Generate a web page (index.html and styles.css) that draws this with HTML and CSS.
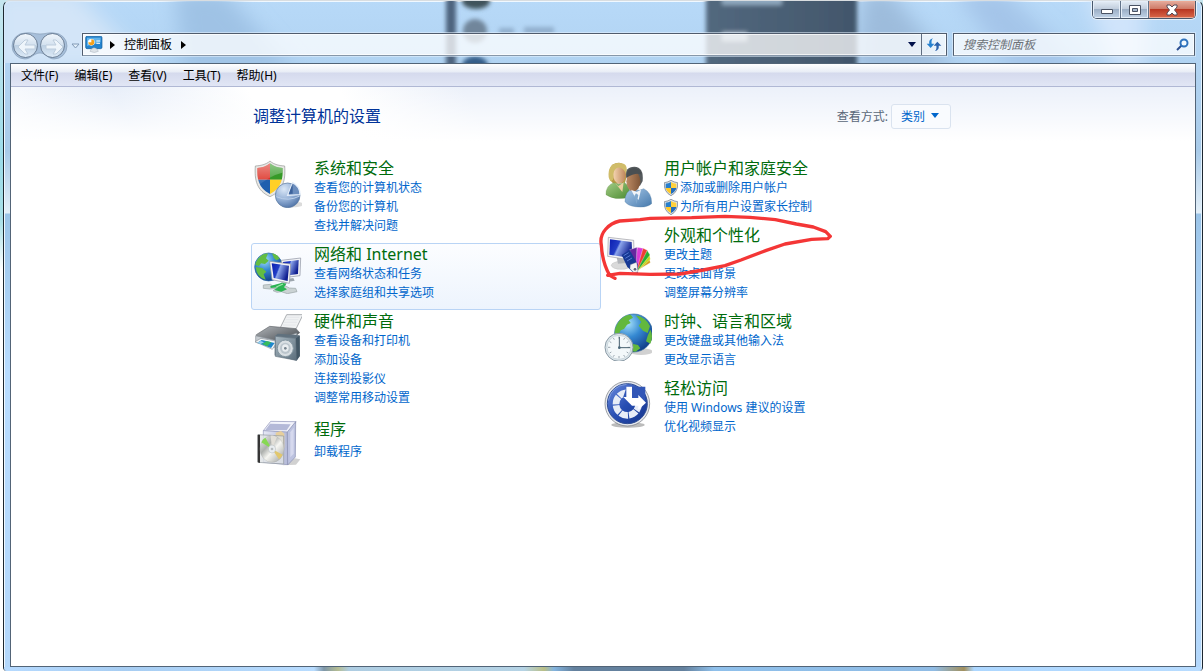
FILE: index.html
```html
<!DOCTYPE html>
<html lang="zh-CN">
<head>
<meta charset="utf-8">
<title>控制面板</title>
<link rel="stylesheet" href="styles.css">
</head>
<body>
<div class="window">
  <svg class="glass" aria-hidden="true">
    <defs>
      <filter id="soft" x="-20%" y="-20%" width="140%" height="140%"><feGaussianBlur stdDeviation="2"/></filter>
      <filter id="softer" x="-50%" y="-50%" width="200%" height="200%"><feGaussianBlur stdDeviation="10"/></filter>
      <linearGradient id="dark"><stop stop-color="#52687e"/><stop offset="1" stop-color="#42566b"/></linearGradient>
    </defs>
    <g filter="url(#softer)">
      <path d="M-10-10H70L150 70H-10z" fill="#d3e5f8"/>
      <path d="M170-10H220L290 70H180z" fill="#9fc2e5"/>
      <path d="M860-10H885L950 70H850z" fill="#9dbcdc"/>
      <path d="M950-10H1000L1080 70H1010z" fill="#a4c5e9"/>
      <path d="M1080-10H1140V70H1110z" fill="#d0e4fb"/>
    </g>
    <g filter="url(#soft)">
      <path d="M442-5h10v75h-10z" fill="#4d647e"/>
      <path d="M702-5h151v75H702z" fill="url(#dark)"/>
      <path d="M718-5h60V4h-60z" fill="#90a9bf"/>
      <path d="M718 31h25v9h-25z" fill="#a4b4c5"/>
      <ellipse cx="472" cy="0" rx="14" ry="8" fill="#41535b"/>
      <ellipse cx="471" cy="30" rx="12" ry="12" fill="#71869b"/>
      <ellipse cx="471" cy="65" rx="13" ry="10" fill="#355d88"/>
      <path d="M495 27h15v7h-15zM520 26h30v7h-30z" fill="#91afcd"/>
    </g>
  </svg>
  <header class="titlebar">
    <div class="caption-buttons">
      <button class="caption-button" aria-label="最小化"><svg width="14" height="12" viewBox="0 0 14 12"><path d="M1.500 5.500h11v4h-11z" fill="#fff" stroke="#4a5364"/></svg></button>
      <button class="caption-button" aria-label="最大化"><svg width="14" height="12" viewBox="0 0 14 12"><path d="M1.500 1.500h11v9h-11z" fill="#fff" stroke="#4a5364"/><path d="M4.500 4.500h5v3h-5z" fill="#a5b7cc" stroke="#4a5364"/></svg></button>
      <button class="caption-button close" aria-label="关闭"><svg width="14" height="12" viewBox="0 0 14 12"><path d="M2 1h3l2 2 2-2h3v2L9.500 6 12 9v2H9L7 9l-2 2H2V9l2.500-3L2 3z" fill="#fff" stroke="#534a56"/></svg></button>
    </div>
  </header>
  <div class="toolbar">
    <div class="history">
      <svg class="history-plate" width="58" height="28" viewBox="0 0 58 28" aria-hidden="true"><path d="M14 1C21 0 23 2 29 2S38 0 43 1A13 13 0 0 1 43 27C37 27 35 21 29 21S20 27 14 27A13 13 0 0 1 14 1z" fill="#8fabc9" fill-opacity=".65" stroke="#8499b2" stroke-opacity=".6"/></svg>
      <button class="nav-button" aria-label="后退"><svg width="26" height="26" viewBox="0 0 26 26"><path d="M4 13l7-7h3l-3 5h10v4H11l3 5h-3z" fill="#eef5fb" stroke="#bdcddd"/></svg></button>
      <button class="nav-button" aria-label="前进"><svg width="26" height="26" viewBox="0 0 26 26"><path d="M22 13l-7-7h-3l3 5H5v4h10l-3 5h3z" fill="#eef5fb" stroke="#bdcddd"/></svg></button>
    </div>
    <button class="recent" aria-label="最近的页面"><svg width="9" height="6" viewBox="0 0 9 6"><path d="M1 1h7L4.500 5z" fill="#e4f0fb" stroke="#829ab6"/></svg></button>
    <nav class="address" aria-label="地址">
      <svg class="address-icon" width="18" height="17" viewBox="0 0 54 51"><rect x="2" y="1" width="49" height="37" rx="4" fill="#2484cf" stroke="#155f9b" stroke-width="2"/><path d="M6 5h41v14L6 30z" fill="#61b3ea"/><circle cx="19" cy="19" r="10" fill="#fff"/><path d="M19 19V10a9 9 0 1 1-9 9z" fill="#f6a11b"/><path d="M34 15h11M34 22h11" stroke="#fff" stroke-width="3"/><path d="M19 39q8-8 17 0l4 7q-12 7-25 0z" fill="#dde3e8" stroke="#8b98a5"/></svg>
      <svg width="5" height="8" viewBox="0 0 5 8"><path d="M0 0v8l5-4z"/></svg>
      <a class="crumb" href="#">控制面板</a>
      <svg width="5" height="8" viewBox="0 0 5 8"><path d="M0 0v8l5-4z"/></svg>
      <span class="spacer"></span>
      <button class="address-drop" aria-label="以前的位置"><svg width="8" height="5" viewBox="0 0 8 5"><path d="M0 0h8L4 5z" fill="#00104a"/></svg></button>
      <button class="refresh" aria-label="刷新"><svg width="16" height="14" viewBox="0 0 48 42"><path d="M21 1C10 4 9 10 10 17H2l12 13 11-13h-8C16 9 17 5 21 1z" fill="#2681cf"/><path d="M27 39c11-3 12-9 11-16h8L34 11 23 23h8c1 8 0 12-4 16z" fill="#2b62ac"/></svg></button>
    </nav>
    <form class="search">
      <input class="search-input" type="text" placeholder="搜索控制面板" aria-label="搜索控制面板">
      <button class="search-button" type="button" aria-label="搜索"><svg width="13" height="13" viewBox="0 0 13 13"><path d="M1 12l5-5" stroke="#2c4f91" stroke-width="2"/><circle cx="8" cy="5" r="3.500" fill="#f3faff" stroke="#2f73bd" stroke-width="2"/></svg></button>
    </form>
  </div>
  <div class="client">
    <nav class="menubar" aria-label="菜单">
      <button class="menu">文件(F)</button><button class="menu">编辑(E)</button><button class="menu">查看(V)</button><button class="menu">工具(T)</button><button class="menu">帮助(H)</button>
    </nav>
    <main class="content">
      <div class="panel">
        <div class="panel-head">
          <h1 class="title">调整计算机的设置</h1>
          <label class="view-label" for="view">查看方式:</label>
          <div class="view">
            <select class="view-select" id="view"><option>类别</option><option>大图标</option><option>小图标</option></select>
            <svg class="view-arrow" width="8" height="5" viewBox="0 0 8 5" aria-hidden="true"><path d="M0 0h8L4 5z" fill="#06c"/></svg>
          </div>
        </div>
        <div class="categories">
          <div class="column">
            <section class="category">
              <svg class="icon" viewBox="0 0 144 144" aria-hidden="true">
                <defs>
                  <clipPath id="shield"><path d="M48 10C59 20 73 23 86 24C87 54 84 83 48 102C12 83 9 54 10 24C23 23 37 20 48 10z"/></clipPath>
                  <radialGradient id="pie" cx=".35" cy=".25" r=".8"><stop stop-color="#dbe8f7"/><stop offset=".55" stop-color="#94b0d6"/><stop offset="1" stop-color="#4e72a6"/></radialGradient>
                  <linearGradient id="shine" x2="0" y2="1"><stop stop-color="#fff" stop-opacity=".5"/><stop offset="1" stop-color="#fff" stop-opacity="0"/></linearGradient>
                </defs>
                <ellipse cx="112" cy="133" rx="36" ry="9" fill="#ccc" opacity=".7"/>
                <path d="M48 3C60 14 77 17 92 18C95 60 88 92 48 110C8 92 1 60 4 18C19 17 36 14 48 3z" fill="#e8e8e6" stroke="#939693" stroke-width="2"/>
                <g clip-path="url(#shield)"><path d="M0 0h48v59H0z" fill="#dc2c20"/><path d="M48 0h48v59H48z" fill="#369a28"/><path d="M0 59h48v60H0z" fill="#1f5fae"/><path d="M48 59h48v60H48z" fill="#ffd027"/><path d="M0 0h96v36Q50 44 5 84z" fill="url(#shine)"/></g>
                <circle cx="101" cy="106" r="37" fill="url(#pie)" stroke="#58779f" stroke-width="2"/>
                <path d="M101 106L116 68A40 40 0 0 1 138 104z" fill="#6b8dbd" stroke="#e6effa" stroke-width="4"/><path d="M104 102l12-32v31z" fill="#3d639c"/>
                <path d="M67 110q36 16 70-2" stroke="#b9cee8" stroke-width="3" fill="none"/>
              </svg>
              <div class="category-text"><h2 class="category-title"><a href="#">系统和安全</a></h2><a class="task" href="#">查看您的计算机状态</a><a class="task" href="#">备份您的计算机</a><a class="task" href="#">查找并解决问题</a></div>
            </section>
            <section class="category selected">
              <svg class="icon" viewBox="0 0 144 144" aria-hidden="true">
                <defs>
                  <radialGradient id="sea" cx=".35" cy=".25" r=".8"><stop stop-color="#a5e0fa"/><stop offset=".45" stop-color="#3589d2"/><stop offset="1" stop-color="#103a85"/></radialGradient>
                  <linearGradient id="screen" x1="0" y1="0" x2="1" y2=".4"><stop stop-color="#0b1db1"/><stop offset=".42" stop-color="#223dc5"/><stop offset=".5" stop-color="#8ca5ec"/><stop offset="1" stop-color="#102091"/></linearGradient>
                </defs>
                <circle cx="44" cy="63" r="42" fill="url(#sea)" stroke="#2968a1" stroke-width="2"/>
                <path d="M17 34Q28 20 42 23L36 37 44 44 33 54 21 52 15 60 4 57Q6 43 17 34zM54 22Q70 24 77 38L67 43 60 37zM5 63l20 3 12 11-8 8 6 16Q8 94 5 63z" fill="#62bd43"/>
                <path d="M82 43l58-7-2 53-55 7z" fill="#f1f2f5" stroke="#898f9e" stroke-width="2"/><path d="M87 48l47-6-2 42-44 6z" fill="url(#screen)"/>
                <path d="M104 98l14-2 4 8-17 3z" fill="#9da6ae"/>
                <path d="M47 46l63 8-4 58-52-11z" fill="#f4f4f6" stroke="#8b909d" stroke-width="2"/><path d="M53 52l52 7-4 46-42-9z" fill="url(#screen)"/>
                <path d="M28 117l22-2 6 5 20-4 10-8 11 2-4 9 13 7 19 1 4 10-29 6-18-6-13 2-12-5 11-7-20 2-20-2z" fill="#cbd3d4" stroke="#99a3a5" stroke-width="2"/>
                <path d="M49 120l36-10 12 3-7 11 9 6-17 7-21-5 11-8-22 2z" fill="#2bb452"/>
                <path d="M67 123l20-9" stroke="#a2e9ae" stroke-width="4"/>
              </svg>
              <div class="category-text"><h2 class="category-title"><a href="#">网络和 Internet</a></h2><a class="task" href="#">查看网络状态和任务</a><a class="task" href="#">选择家庭组和共享选项</a></div>
            </section>
            <section class="category">
              <svg class="icon" viewBox="0 0 144 144" aria-hidden="true">
                <defs>
                  <linearGradient id="metal" x2="1" y2="1"><stop stop-color="#a9b8c1"/><stop offset="1" stop-color="#5b6e7c"/></linearGradient>
                  <linearGradient id="lid" x2="1" y2="1"><stop stop-color="#b1b5b9"/><stop offset="1" stop-color="#3d4247"/></linearGradient>
                </defs>
                <path d="M76 50L98 5h49l-22 45z" fill="#f0f2f3" stroke="#858a8e" stroke-width="2"/><path d="M98 13h38M95 20h38M91 28h38M87 36h38" stroke="#e0e3e6" stroke-width="2"/>
                <path d="M7 65l40-25 79 7 11 12-39 31-87-12z" fill="url(#lid)" stroke="#62676b" stroke-width="2"/>
                <path d="M5 68l63 15 60-23v19L66 104 5 88z" fill="#c6ccd1" stroke="#899198" stroke-width="2"/>
                <path d="M3 86l18-10 50 9-16 24z" fill="#f3f5f6" stroke="#89929a" stroke-width="2"/><path d="M10 89l13-8 39 9-11 15z" fill="#1e87cb"/><path d="M25 93l13-9 14 4-12 12z" fill="#37bb5d"/><path d="M10 89l10-5 10 4-10 5z" fill="#9cd2ee"/>
                <path d="M63 70l8-8 66 5 1 62-10 14-66-16z" fill="#60717e"/>
                <path d="M64 70l61 6 2 66-63-12z" fill="url(#metal)" stroke="#667682" stroke-width="2"/><path d="M126 76l11-8v61l-9 13z" fill="#435765"/>
                <ellipse cx="94" cy="106" rx="24" ry="25" fill="#d9dfe3" stroke="#8496a1" stroke-width="3"/><ellipse cx="94" cy="106" rx="16" ry="17" fill="#bbc5cc"/><ellipse cx="94" cy="105" rx="10" ry="11" fill="#e9edf0"/><circle cx="94" cy="106" r="4" fill="#78858f"/>
              </svg>
              <div class="category-text"><h2 class="category-title"><a href="#">硬件和声音</a></h2><a class="task" href="#">查看设备和打印机</a><a class="task" href="#">添加设备</a><a class="task" href="#">连接到投影仪</a><a class="task" href="#">调整常用移动设置</a></div>
            </section>
            <section class="category">
              <svg class="icon" viewBox="0 0 144 144" aria-hidden="true">
                <defs>
                  <linearGradient id="box" x2="1"><stop stop-color="#e6e8f5"/><stop offset="1" stop-color="#b4bad8"/></linearGradient>
                  <linearGradient id="disc" x2="1" y2="1"><stop stop-color="#f7f7f7"/><stop offset=".35" stop-color="#adb0ad"/><stop offset=".55" stop-color="#f6f6f2"/><stop offset="1" stop-color="#969996"/></linearGradient>
                </defs>
                <path d="M122 121l17 3-13 16-40 2z" fill="#d1d1d1"/>
                <path d="M28 38L50 10l76 1-17 33z" fill="#f2f3fb" stroke="#8c91b8" stroke-width="2"/><path d="M48 17l62 2-12 18-64-1z" fill="#b4b9d8"/>
                <path d="M28 38l72 4 1 98-73-7z" fill="url(#box)" stroke="#9298bb" stroke-width="2"/><path d="M100 42l25-31-1 106-23 24z" fill="#bcc2df" stroke="#858bad" stroke-width="2"/><path d="M109 43l10-14v78l-10 11z" fill="#d6d9ee"/>
                <path d="M65 44l16-5 10 8v43H67z" fill="#e7cf9c"/>
                <path d="M12 50l77 4v84l-77-5z" fill="#dfe2e5" fill-opacity=".8" stroke="#8e969c" stroke-width="2"/><path d="M11 50h7v85l-7-2z" fill="#353535"/>
                <ellipse cx="54" cy="93" rx="36" ry="40" fill="url(#disc)" stroke="#a5a8a8"/>
                <path d="M54 93L22 73q4-10 12-14z" fill="#87d853"/><path d="M54 93l32 17q-4 8-11 14z" fill="#e1c76d"/><path d="M54 93l-4-40q10-2 19 5z" fill="#e2dfd8"/>
                <ellipse cx="54" cy="93" rx="11" ry="12" fill="#e9edf0" stroke="#989e9f"/><circle cx="54" cy="93" r="4" fill="#b7bdbe"/>
              </svg>
              <div class="category-text"><h2 class="category-title"><a href="#">程序</a></h2><a class="task" href="#">卸载程序</a></div>
            </section>
          </div>
          <div class="column">
            <section class="category">
              <svg class="icon" viewBox="0 0 144 144" aria-hidden="true">
                <defs>
                  <linearGradient id="green" x2="1" y2="1"><stop stop-color="#a2cc85"/><stop offset="1" stop-color="#4c8b32"/></linearGradient>
                  <linearGradient id="blue" x2="1" y2="1"><stop stop-color="#a7c8e8"/><stop offset="1" stop-color="#4679ac"/></linearGradient>
                  <linearGradient id="skin" x2="1"><stop stop-color="#f5d5b2"/><stop offset="1" stop-color="#bd855b"/></linearGradient>
                  <linearGradient id="tan" x2="1"><stop stop-color="#bd8b64"/><stop offset="1" stop-color="#805638"/></linearGradient>
                </defs>
                <path d="M18 60C10 32 20 6 46 8C68 10 72 40 63 68L29 72z" fill="#b79a45"/><ellipse cx="46" cy="42" rx="19" ry="29" fill="url(#skin)"/><path d="M14 52Q10 11 43 9T66 43Q60 25 48 23T29 36l-2 24-8 4z" fill="#d0bc69"/>
                <path d="M6 104Q5 77 29 68l15 5 18-5q20 13 14 43Q35 123 6 104z" fill="url(#green)" stroke="#5f8b45"/><path d="M31 66l12 13 16-12-4 29z" fill="#edce9f"/>
                <path d="M63 125Q62 94 86 86l20 5 13-5q25 12 24 45-17 14-49 9-23-3-31-15z" fill="url(#blue)" stroke="#527ba0"/>
                <path d="M67 50Q62 20 91 20q29 1 25 43l-8 14H75z" fill="#555a5d"/>
                <ellipse cx="88" cy="64" rx="21" ry="30" fill="url(#tan)"/><path d="M67 53Q66 25 90 24q20 1 23 20-16-9-46 9z" fill="#4a4f52"/>
                <path d="M81 89l17 7 13-7-7 30-9-4z" fill="#f1f5f9"/><path d="M96 100l7 5-5 27-7-24z" fill="#80a8cd"/>
              </svg>
              <div class="category-text"><h2 class="category-title"><a href="#">用户帐户和家庭安全</a></h2>
                <a class="task" href="#"><svg class="uac" viewBox="0 0 42 48"><use href="#uac"/></svg>添加或删除用户帐户</a>
                <a class="task" href="#"><svg class="uac" viewBox="0 0 42 48"><use href="#uac"/></svg>为所有用户设置家长控制</a>
              </div>
            </section>
            <section class="category">
              <svg class="icon" viewBox="0 0 144 144" aria-hidden="true">
                <ellipse cx="51" cy="115" rx="29" ry="12" fill="#dadada" stroke="#adadad"/><path d="M38 91h21l7 17-24 2z" fill="#b2b5ba"/>
                <path d="M13 31l76 9 2 61-80-13z" fill="#f4f4f5" stroke="#9a9ca3" stroke-width="2"/><path d="M18 37l65 8 2 49-69-11z" fill="url(#screen)"/>
                <g stroke="#fff" stroke-width="1"><path d="M98 131l41-24-3-14-39 33z" fill="#d39b18"/><path d="M95 131l41-52 3 18-38 35z" fill="#c5d91a"/><path d="M94 130l35-61 9 15-36 46z" fill="#29ad31"/><path d="M92 130l24-67 14 7-30 59z" fill="#ef3e30"/><path d="M89 130l11-69 17 3-19 65z" fill="#d93ad8"/><path d="M86 127L77 68l22-7-3 67z" fill="#65279e"/></g>
                <path d="M53 84l24-15 24 42 1 26-15-1-17-16z" fill="#173994"/><path d="M59 86l15-9M64 94l15-9M69 102l15-9" stroke="#567bd4" stroke-width="3"/><path d="M79 113l19-7 4 28-12 3-12-12z" fill="#f3f4f5" stroke="#85888e"/><circle cx="93" cy="127" r="4" fill="#596375"/>
              </svg>
              <div class="category-text"><h2 class="category-title"><a href="#">外观和个性化</a></h2><a class="task" href="#">更改主题</a><a class="task" href="#">更改桌面背景</a><a class="task" href="#">调整屏幕分辨率</a></div>
              <svg class="marker" viewBox="6 192 714 204" aria-hidden="true"><path d="M60 385L44 376C33 357 21 320 19 285C11 248 43 220 74 213L135 209 166 205 290 203 390 199 465 202 541 209 604 222 655 231 692 245 706 259 698 266 650 268 570 282 514 301 438 330 390 347 325 360 255 372 165 373 75 370 38 376" fill="none" stroke="#f43636" stroke-width="10" stroke-linejoin="round" stroke-linecap="round"/></svg>
            </section>
            <section class="category">
              <svg class="icon" viewBox="0 0 144 144" aria-hidden="true">
                <ellipse cx="111" cy="116" rx="35" ry="10" fill="#bdbdbd" opacity=".7"/>
                <circle cx="89" cy="60" r="57" fill="url(#sea)" stroke="#346d9d" stroke-width="2"/>
                <path d="M43 28Q58 5 80 5l7 9-13 8 6 8-11 5-9 13-10 4-8 18-10-10Q32 45 43 28zM95 7q29 5 43 32l-7 21-14-7-13-15 8-11zM139 50q10 19 0 42l-13-7 5-17zM84 92l18 4 7 10-14 10-22-3z" fill="#63b83d"/>
                <circle cx="45" cy="103" r="42" fill="#dce5ea" stroke="#8b9ba6" stroke-width="3"/><circle cx="45" cy="103" r="36" fill="#f3f8fa" stroke="#b9c8d0" stroke-width="2"/>
                <path d="M45 70v7M45 129v7M12 103h7M71 103h7M28 75l3 5M59 126l3 5M17 86l5 3M68 117l5 3M73 86l-5 3M22 117l-5 3M62 75l-3 5M31 126l-3 5" stroke="#71818c" stroke-width="2"/><path d="M46 72v32h33" fill="none" stroke="#48606f" stroke-width="3"/><circle cx="46" cy="104" r="4" fill="#49677a"/>
              </svg>
              <div class="category-text"><h2 class="category-title"><a href="#">时钟、语言和区域</a></h2><a class="task" href="#">更改键盘或其他输入法</a><a class="task" href="#">更改显示语言</a></div>
            </section>
            <section class="category">
              <svg class="icon" viewBox="0 0 144 144" aria-hidden="true">
                <defs><linearGradient id="ease" x2="1" y2="1"><stop stop-color="#6d8ddf"/><stop offset=".5" stop-color="#274db2"/><stop offset="1" stop-color="#17368b"/></linearGradient></defs>
                <ellipse cx="72" cy="135" rx="50" ry="8" fill="#bbb"/><circle cx="70" cy="71" r="67" fill="#e6e8ed" stroke="#73777f" stroke-width="2"/><circle cx="70" cy="71" r="60" fill="url(#ease)" stroke="#304e94" stroke-width="3"/>
                <circle cx="70" cy="72" r="34" fill="none" stroke="#e8edf7" stroke-width="20" stroke-dasharray="24 3" stroke-dashoffset="3"/>
                <path d="M68 20h56v50H76L58 50z" fill="#3156b6"/>
                <path d="M67 20h17v34h19V45l23 23-23 21V77H84L58 51h9z" fill="#fff"/>
                <path d="M13 62Q22 17 68 13" fill="none" stroke="#9eb5e8" stroke-width="3" opacity=".6"/>
              </svg>
              <div class="category-text"><h2 class="category-title"><a href="#">轻松访问</a></h2><a class="task" href="#">使用 Windows 建议的设置</a><a class="task" href="#">优化视频显示</a></div>
            </section>
          </div>
        </div>
      </div>
    </main>
  </div>
  <div class="bottom-frame"></div>
</div>
<svg class="symbols" aria-hidden="true"><defs><symbol id="uac" viewBox="0 0 42 48"><path d="M21 1Q30 7 41 8Q43 36 21 47Q-1 36 1 8Q12 7 21 1z" fill="#dce2e8" stroke="#65717d" stroke-width="2"/><path d="M21 6v18H5V11q9 0 16-5z" fill="#287fcc"/><path d="M21 6q7 5 16 5v13H21z" fill="#ffd13c"/><path d="M5 24h16v18Q7 35 5 24z" fill="#ffc928"/><path d="M21 24h16q-2 11-16 18z" fill="#226dbc"/></symbol></defs></svg>
</body>
</html>
```
FILE: styles.css
```css
* { box-sizing: border-box; }

body {
  margin: 0;
  min-height: 100vh;
  padding-left: 3px;
  display: flex;
  background: linear-gradient(#c6e6ef 0, #9cdce9 160px, #a9e0e8 220px, #fff 270px);
  color: #000;
  font: 12px/19px "Noto Sans", "Noto Sans CJK SC", sans-serif;
}

a { color: inherit; text-decoration: none; }

button, input, select {
  margin: 0;
  padding: 0;
  border: 0;
  background: none;
  color: inherit;
  font: inherit;
}

svg { display: block; flex: none; }

.symbols { position: absolute; width: 0; height: 0; }

.window {
  position: relative;
  flex: 1;
  min-width: 0;
  display: flex;
  flex-direction: column;
  padding: 0 6px;
  border: 1px solid #1d2730;
  border-top-color: #d9dde0;
  border-bottom: 0;
  border-radius: 7px 7px 4px 4px;
  box-shadow: inset 1px 1px #f0f8ff, inset -1px 0 #e4f3ff;
  background: linear-gradient(#b7d9f8 0, #a9cbe9 150px, #e3eff8 212px, #9bc4e8 213px, #b8dcff 370px, #b3d7fb);
  overflow: hidden;
}

.glass {
  position: absolute;
  inset: 0;
  width: 100%;
  height: 62px;
}

.titlebar {
  position: relative;
  height: 32px;
  display: flex;
  justify-content: flex-end;
  align-items: flex-start;
}

.caption-buttons {
  display: flex;
  height: 18px;
  border: 1px solid #49586c;
  border-top: 0;
  border-radius: 0 0 5px 5px;
  box-shadow: 0 0 0 1px #e6f1fb;
  overflow: hidden;
}

.caption-button {
  width: 28px;
  display: grid;
  place-items: center;
  border-right: 1px solid #627389;
  background: linear-gradient(#e5edf6 0, #bfccdc 48%, #9cafc6 50%, #c1d3e7);
  box-shadow: inset 0 0 0 1px #e5eef8;
}

.caption-button.close {
  width: 46px;
  border: 0;
  background: linear-gradient(#e4ac9e 0, #ce7764 48%, #b83723 50%, #d9694b);
  box-shadow: inset 0 0 0 1px #eba995;
}

.toolbar {
  position: relative;
  height: 30px;
  display: flex;
  align-items: flex-start;
}

.history {
  position: relative;
  display: flex;
  gap: 2px;
  width: 59px;
  padding: 0 3px;
}

.history-plate { position: absolute; left: 1px; top: -1px; }

.nav-button {
  position: relative;
  width: 25px;
  height: 25px;
  flex: none;
  border: 1px solid #6c7f96;
  border-radius: 50%;
  display: grid;
  place-items: center;
  background: linear-gradient(#f0f6fc 0, #d3e1ef 48%, #bdd0e3 50%, #dceaf7);
}

.recent {
  width: 13px;
  height: 26px;
  display: grid;
  place-items: center;
}

.address, .search {
  height: 23px;
  display: flex;
  align-items: center;
  border: 1px solid #505c6d;
  border-bottom-color: #8797a9;
  background: rgba(255, 255, 255, .75);
  box-shadow: inset 0 0 0 1px rgba(255, 255, 255, .7), 0 0 0 1px rgba(230, 243, 255, .55);
}

.address { flex: 1; min-width: 0; padding-left: 2px; }
.address-icon { margin-right: 7px; }
.crumb { padding: 0 9px; }
.spacer { flex: 1; }

.address-drop { width: 19px; height: 21px; display: grid; place-items: center; }

.refresh {
  width: 25px;
  height: 21px;
  display: grid;
  place-items: center;
  border-left: 1px solid #5e6c80;
}

.search {
  width: 242px;
  margin: 0 1px 0 6px;
  padding: 0 5px 0 9px;
}

.search-input { flex: 1; min-width: 0; height: 21px; outline: 0; }
.search-input::placeholder { color: #6d7278; font-style: italic; opacity: 1; }
.search-button { width: 14px; height: 21px; display: grid; place-items: center; }

.client {
  position: relative;
  flex: 1;
  display: flex;
  flex-direction: column;
  border: 1px solid #526477;
  background: #fff;
}

.menubar {
  height: 23px;
  padding-left: 2px;
  display: flex;
  border-bottom: 1px solid #b0b8d4;
  background: linear-gradient(#fff 0, #e8edf6 8px, #d5daed 9px, #e1e6f5);
}

.menu { padding: 0 8px; line-height: 23px; }

.content {
  flex: 1;
  padding: 17px 20px 20px 240px;
  background:
    linear-gradient(transparent, #fff 54px),
    linear-gradient(62deg, #fff 0, #f5f8fd 170px, #fff 220px, #e7eef9 360px, #fff 480px, #fff 560px, #ecf1fa 670px, #ecf1fa);
}

.panel { max-width: 700px; }

.panel-head {
  height: 25px;
  display: flex;
  align-items: center;
  padding-left: 2px;
}

.title {
  flex: 1;
  margin: 0;
  color: #039;
  font-size: 16px;
  font-weight: 400;
  line-height: 25px;
}

.view-label { color: #5a6778; margin-right: 3px; }
.view { position: relative; }

.view-select {
  appearance: none;
  width: 60px;
  height: 25px;
  padding-left: 9px;
  border: 1px solid #dae3ef;
  border-radius: 3px;
  background: #f9fbfe;
  color: #06c;
}

.view-arrow { position: absolute; right: 12px; top: 9px; pointer-events: none; }

.categories {
  display: grid;
  grid-template-columns: repeat(2, minmax(0, 1fr));
  margin-top: 28px;
}

.category {
  position: relative;
  display: flex;
  gap: 12px;
  min-height: 57px;
  padding: 0 2px;
  border: 1px solid transparent;
  border-radius: 3px;
}

.category.selected {
  border-color: #b9d4f5;
  background: linear-gradient(#fcfdff, #edf4fd);
}

.icon { width: 48px; height: 48px; margin-top: 2px; }

.category-text {
  display: flex;
  flex-direction: column;
  justify-content: space-evenly;
  align-items: flex-start;
  padding-bottom: 7px;
}

.category-title {
  margin: 0;
  color: #006b0c;
  font-size: 16px;
  font-weight: 400;
  line-height: 20px;
}

.task {
  display: flex;
  align-items: center;
  gap: 2px;
  height: 19px;
  color: #06c;
}

.uac { width: 14px; height: 16px; }

.marker {
  position: absolute;
  left: -5px;
  top: -11px;
  width: 238px;
  height: 68px;
  pointer-events: none;
}

.bottom-frame {
  position: relative;
  height: 4px;
  margin: 0 -6px;
  background: linear-gradient(90deg, #b6daff 0, #a7cdf2 120px, #b8dcff 310px, #7f97a8 320px, #b5bd93 334px, #aecde2 345px, #b5d3e5 520px, #babf86 540px, #83b4df 550px, #64819e 570px, #64819e 680px, #8fc0eb 710px, #90bce5 930px, #a2905d 960px, #add7ff 970px, #b8dcff);
}
```
